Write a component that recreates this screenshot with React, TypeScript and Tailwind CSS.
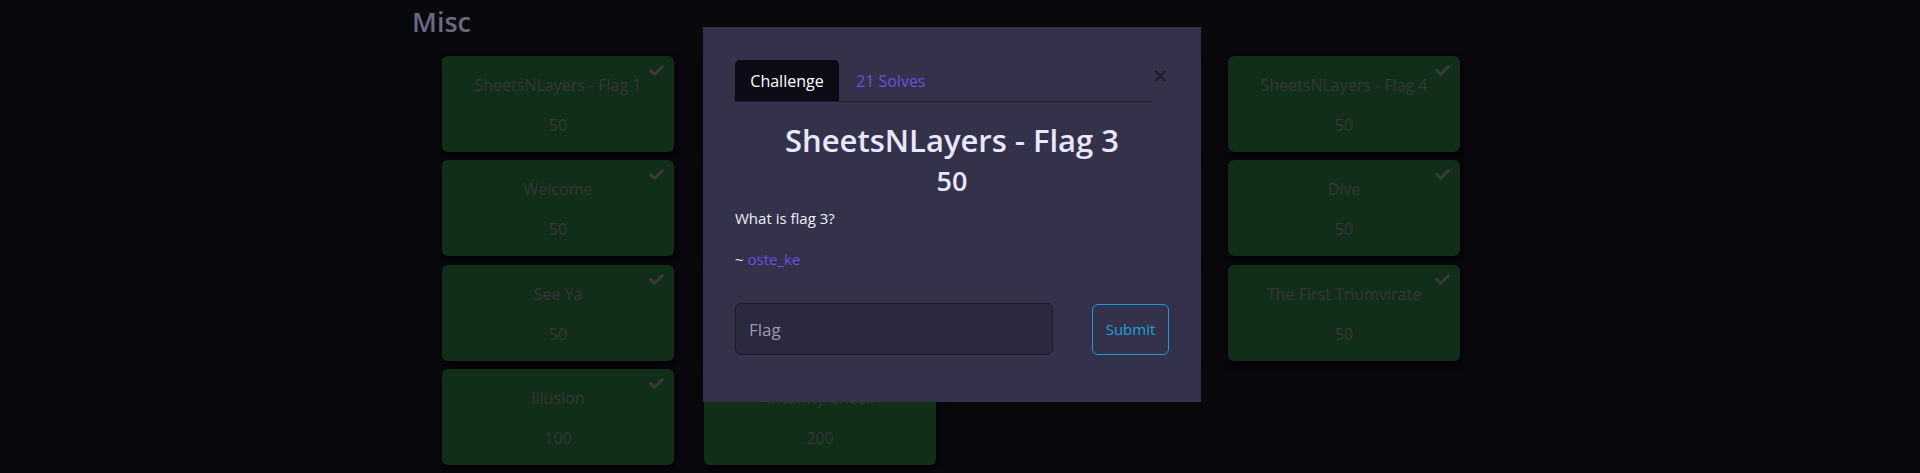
import React from 'react';

type Chal = { name: string; value: number };

const columns: Chal[][] = [
  [
    { name: 'SheetsNLayers - Flag 1', value: 50 },
    { name: 'Welcome', value: 50 },
    { name: 'See Ya', value: 50 },
    { name: 'illusion', value: 100 },
  ],
  [
    { name: 'SheetsNLayers - Flag 2', value: 50 },
    { name: 'Rules', value: 50 },
    { name: 'Survey', value: 50 },
    { name: 'Insanity Check', value: 200 },
  ],
  [
    { name: 'SheetsNLayers - Flag 3', value: 50 },
    { name: 'Discord', value: 50 },
    { name: 'Socials', value: 50 },
  ],
  [
    { name: 'SheetsNLayers - Flag 4', value: 50 },
    { name: 'Dive', value: 50 },
    { name: 'The First Triumvirate', value: 50 },
  ],
];

function Check() {
  return (
    <svg viewBox="0 0 512 512" className="h-[15px] w-[15px]" fill="#3a3a3c">
      <path d="M173.898 439.404l-166.4-166.4c-9.997-9.997-9.997-26.206 0-36.204l36.203-36.204c9.997-9.998 26.207-9.998 36.204 0L192 312.69 432.095 72.596c9.997-9.997 26.207-9.997 36.204 0l36.203 36.204c9.997 9.997 9.997 26.206 0 36.204l-294.4 294.401c-9.998 9.997-26.207 9.997-36.204-.001z" />
    </svg>
  );
}

function ChallengeCard({ chal }: { chal: Chal }) {
  return (
    <div className="relative flex h-[96px] flex-col items-center rounded-[6px] bg-[#112e18] pt-[18px] text-[16px] leading-[22px] text-[#363638] shadow-[2px_4px_6px_rgba(0,0,0,0.7)]">
      <div className="absolute right-[10px] top-[7px]">
        <Check />
      </div>
      <span>{chal.name}</span>
      <span className="mt-[18px]">{chal.value}</span>
    </div>
  );
}

export default function App() {
  return (
    <div className="relative h-[473px] w-[1920px] overflow-hidden bg-[#08080d] font-['Open_Sans',sans-serif]">
      <h3 className="pl-[412px] pt-[4px] text-[27px] font-semibold leading-[36px] text-[#6a6983]">Misc</h3>

      <div className="ml-[442px] mt-[16px] grid grid-cols-[repeat(4,232px)] gap-x-[30px]">
        {columns.map((col, i) => (
          <div key={i} className="flex flex-col gap-y-[8.4px]">
            {col.map((c) => (
              <ChallengeCard key={c.name} chal={c} />
            ))}
          </div>
        ))}
      </div>

      {/* challenge modal */}
      <div className="absolute left-[703px] top-[27px] h-[375px] w-[498px] bg-[#33324a] px-[32px] pt-[33px]">
        <button className="absolute left-[450px] top-[35px] text-[26px] leading-[26px] text-[#1a1928]">
          ×
        </button>
        <div className="mr-[17px] flex border-b border-[#1d1c2c] text-[16px]">
          <div className="flex h-[41px] w-[104px] items-center justify-center rounded-t-[5px] bg-[#0c0b15] text-white">
            Challenge
          </div>
          <div className="flex h-[41px] items-center px-[17px] text-[#6c4fe0]">21 Solves</div>
        </div>

        <h2 className="mt-[19px] text-center text-[31px] font-semibold leading-[38px] text-[#e8e7ff]">
          SheetsNLayers - Flag 3
        </h2>
        <h3 className="mt-[4px] text-center text-[27px] font-semibold leading-[36px] text-[#e8e7ff]">50</h3>

        <p className="mt-[8px] text-[15px] leading-[22px] text-[#eeeefa]">What is flag 3?</p>
        <p className="mt-[19px] text-[15px] leading-[22px] text-[#eeeefa]">
          ~ <span className="text-[#6c4fe0]">oste_ke</span>
        </p>

        <div className="mt-[33px] flex items-center justify-between">
          <input
            placeholder="Flag"
            className="h-[52px] w-[318px] rounded-[6px] border border-[#1b1a28] bg-[#2a293d] px-[13px] text-[17px] text-white placeholder:text-[#9c9bab] outline-none"
          />
          <button className="h-[51px] w-[77px] rounded-[6px] border border-[#1a9ad6] text-[15px] text-[#1fa0d8]">
            Submit
          </button>
        </div>
      </div>
    </div>
  );
}
